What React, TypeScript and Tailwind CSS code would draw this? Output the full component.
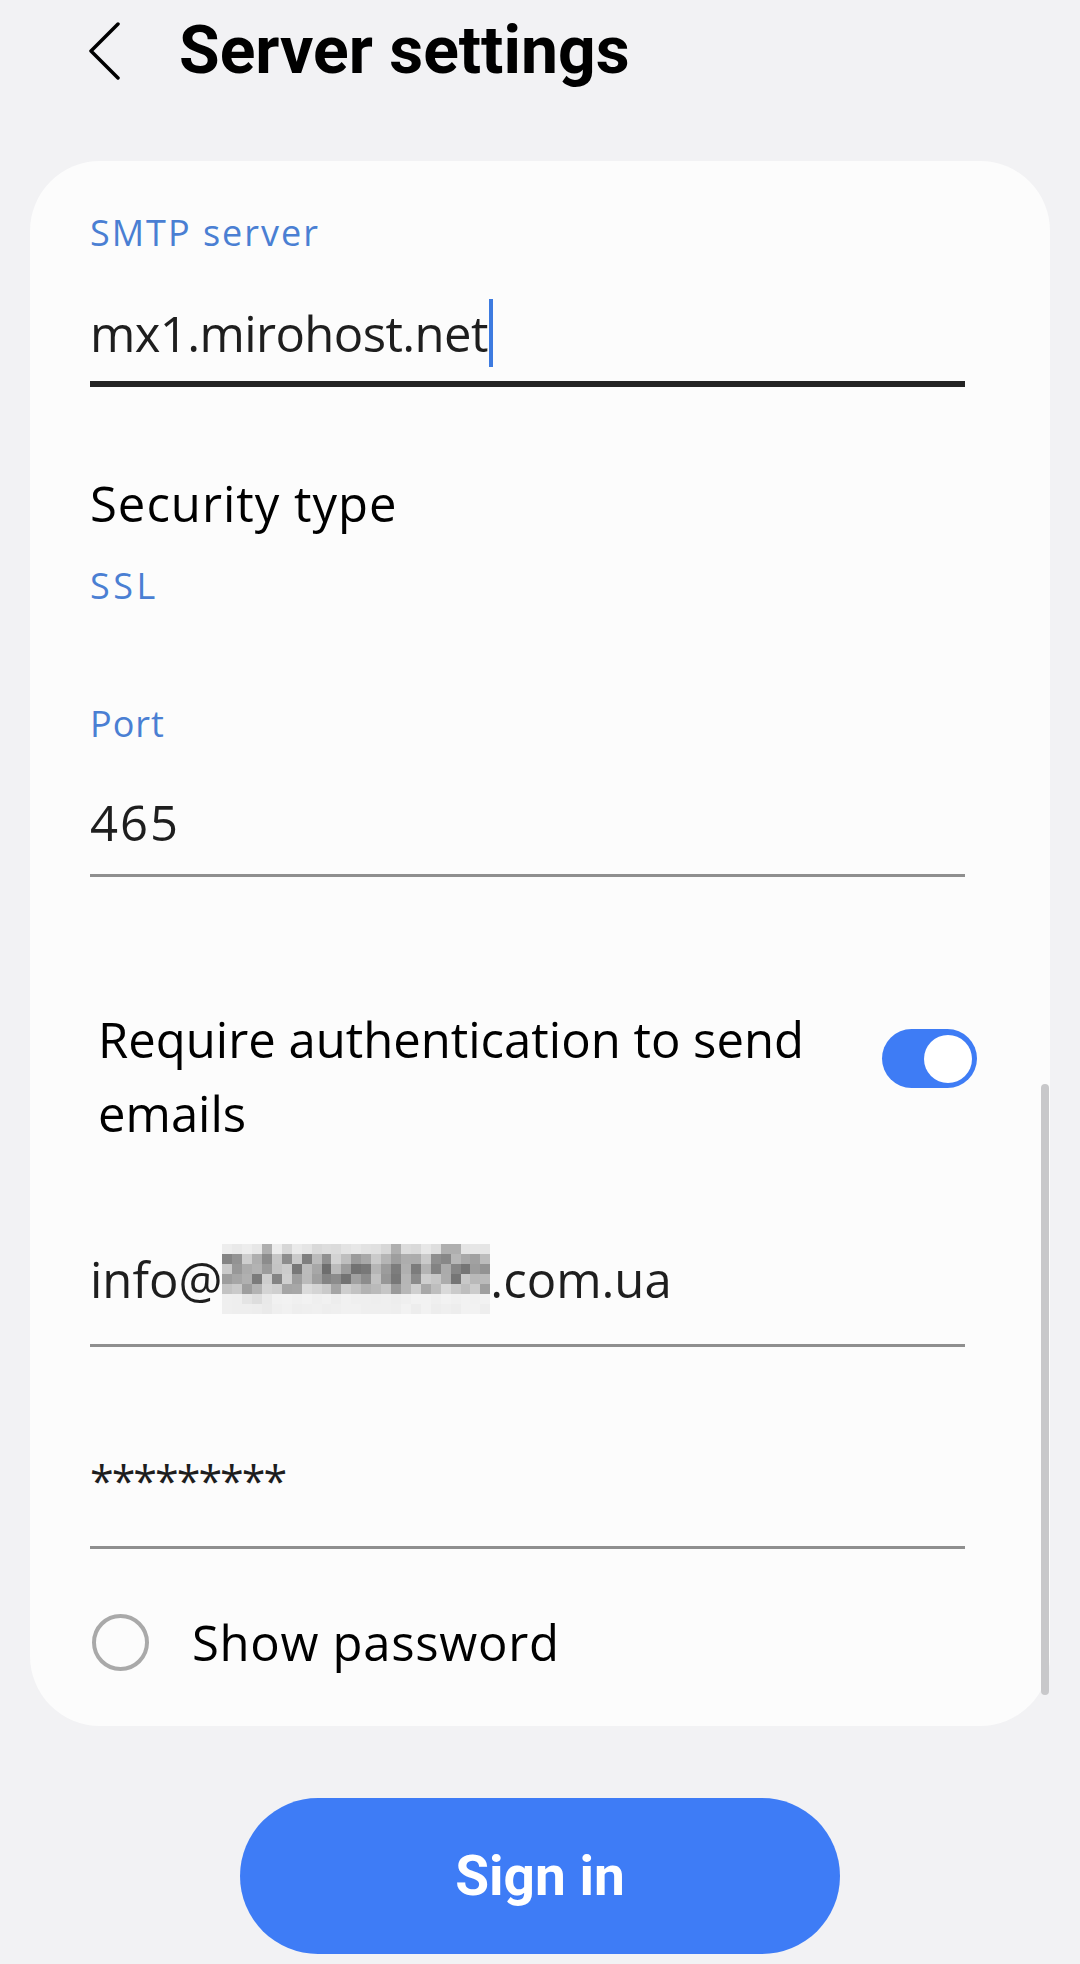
import React from "react";

function Mosaic() {
  const cols = 27;
  const rows = 7;
  const weights = [0.14, 0.55, 0.62, 0.6, 0.42, 0.12, 0.05];
  const cells = Array.from({ length: cols * rows }, (_, i) => {
    const r = Math.floor(i / cols);
    const c = i % cols;
    const s = Math.sin(r * 12.9898 + c * 78.233) * 43758.5453;
    const v = s - Math.floor(s);
    let a = weights[r] * (0.35 + 0.9 * v);
    if (r >= 5 && !(c >= 2 && c <= 4)) a = 0.02 + 0.03 * v;
    if (r === 0 && (c === 4 || c === 17 || c === 22 || c === 23)) a = 0.4;
    return Math.min(a, 0.8);
  });
  return (
    <div className="grid h-[70px] w-[268px] grid-cols-[repeat(27,1fr)] grid-rows-[repeat(7,1fr)] bg-[#f6f6f6]">
      {cells.map((a, i) => (
        <div key={i} style={{ backgroundColor: `rgba(70,70,70,${a.toFixed(3)})` }} />
      ))}
    </div>
  );
}

export default function App() {
  return (
    <div className="min-h-[1964px] w-[1080px] bg-[#f2f2f4] font-['Open_Sans',sans-serif] text-black">
      <header className="flex h-[161px] items-start pl-[88px] pt-[18px]">
        <div className="flex h-[65px] items-center">
          <svg width="34" height="58" viewBox="0 0 34 58" fill="none">
            <path
              d="M30 2 L3 29 L30 56"
              stroke="#000"
              strokeWidth="3.5"
              strokeLinecap="round"
              strokeLinejoin="round"
            />
          </svg>
          <h1 className="ml-[57px] font-['Roboto',sans-serif] text-[66px] font-bold leading-[65px] text-black">
            Server settings
          </h1>
        </div>
      </header>

      <div className="relative mx-[30px] rounded-[70px] bg-[#fcfcfc] pb-[49px] pl-[60px] pr-[85px] pt-[48px]">
        <div className="text-[36px] leading-[48px] tracking-[2px] text-[#4a7fd3]">SMTP server</div>
        <div className="mt-[41px] flex h-[70px] items-center text-[49px] leading-[70px] tracking-[-0.6px] text-[#1e1e1e]">
          <span>mx1.mirohost.net</span>
          <span className="ml-[1px] h-[68px] w-[4px] bg-[#3d7be0]" />
        </div>
        <div className="mt-[13px] h-[6px] bg-[#242424]" />

        <div className="mt-[84px] text-[49px] leading-[64px] tracking-[1px] text-black">Security type</div>
        <div className="mt-[27px] text-[36px] leading-[48px] tracking-[3.5px] text-[#4a7fd3]">SSL</div>

        <div className="mt-[90px] text-[36px] leading-[48px] tracking-[1px] text-[#4a7fd3]">Port</div>
        <div className="mt-[39px] h-[70px] text-[49px] leading-[70px] tracking-[2px] text-[#1e1e1e]">465</div>
        <div className="mt-[17px] h-[3px] bg-[#8f8f8f]" />

        <div className="ml-[8px] mr-[-12px] mt-[125px] flex items-start justify-between">
          <div className="w-[740px] text-[49px] leading-[74px] text-black">
            Require authentication to send emails
          </div>
          <div className="mt-[27px] flex h-[59px] w-[95px] items-center justify-end rounded-full bg-[#3e7cf5] pr-[5px]">
            <div className="h-[48px] w-[48px] rounded-full bg-white" />
          </div>
        </div>

        <div className="mt-[94px] flex h-[70px] items-center text-[49px] leading-[70px] text-[#1e1e1e]">
          <span>info@</span>
          <Mosaic />
          <span>.com.ua</span>
        </div>
        <div className="mt-[30px] h-[3px] bg-[#8f8f8f]" />

        <div className="mt-[99px] h-[70px] text-[43px] leading-[70px] tracking-[-2px] text-[#1e1e1e]">*********</div>
        <div className="mt-[30px] h-[3px] bg-[#8f8f8f]" />

        <div className="mt-[58px] flex h-[70px] items-center">
          <div className="ml-[2px] h-[57px] w-[57px] rounded-full border-[4px] border-[#a9a9a9]" />
          <span className="ml-[43px] text-[49px] leading-[70px] tracking-[0.7px] text-black">Show password</span>
        </div>

        <div className="absolute left-[1011px] top-[923px] h-[611px] w-[8px] rounded-full bg-[#c8c8ca]" />
      </div>

      <div className="mt-[72px] flex justify-center">
        <button className="flex h-[156px] w-[600px] items-center justify-center rounded-full bg-[#3e7cf6] font-['Roboto',sans-serif] text-[55px] font-bold text-white">
          Sign in
        </button>
      </div>
    </div>
  );
}
